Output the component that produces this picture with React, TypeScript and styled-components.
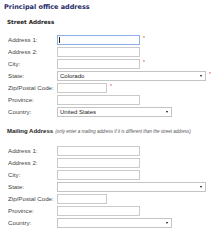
import React from 'react'
import styled, { createGlobalStyle } from 'styled-components'

const GlobalStyle = createGlobalStyle`
  html, body {
    margin: 0;
    padding: 0;
    background: #fff;
  }
`

const Page = styled.div`
  width: 220px;
  height: 229px;
  padding: 2px 0 0 4px;
  box-sizing: border-box;
  overflow: hidden;
  font-family: 'Liberation Sans', Arial, sans-serif;
  color: #333;
`

const Title = styled.div`
  font-family: 'DejaVu Sans', Verdana, sans-serif;
  font-weight: bold;
  font-size: 6.5px;
  line-height: 10px;
  color: #1f2a68;
  white-space: nowrap;
`

const SectionHeading = styled.div<{ top: number }>`
  margin: ${({ top }) => top}px 0 0 3px;
  font-family: 'DejaVu Sans', Verdana, sans-serif;
  font-weight: bold;
  font-size: 5.6px;
  line-height: 8px;
  color: #222;
  white-space: nowrap;
`

const MailingHeading = styled.div`
  margin: 7px 0 0 3px;
  line-height: 8px;
  white-space: nowrap;
  color: #222;
`

const MailingTitle = styled.span`
  font-weight: bold;
  font-size: 6px;
`

const Note = styled.span`
  font-style: italic;
  font-size: 4.5px;
  color: #555;
  margin-left: 2px;
`

const FormGrid = styled.div<{ top: number }>`
  margin: ${({ top }) => top}px 0 0 3px;
  display: grid;
  grid-template-columns: 50px auto;
  grid-auto-rows: 10px;
  row-gap: 2px;
`

const Label = styled.div`
  padding-left: 1px;
  font-size: 6.2px;
  line-height: 10px;
  color: #444;
  white-space: nowrap;
`

const Field = styled.div`
  display: flex;
  align-items: flex-start;
`

const TextBox = styled.div<{ w: number; focused?: boolean }>`
  position: relative;
  width: ${({ w }) => w}px;
  height: 10px;
  box-sizing: border-box;
  border: 1px solid ${({ focused }) => (focused ? '#8fb0e6' : '#cacaca')};
  background: #fff;
`

const Caret = styled.span`
  position: absolute;
  left: 1px;
  top: 1px;
  width: 1px;
  height: 6px;
  background: #222;
`

const SelectBox = styled.div<{ w: number }>`
  width: ${({ w }) => w}px;
  height: 10px;
  box-sizing: border-box;
  border: 1px solid #c4c4c4;
  background: #fff;
  display: flex;
  align-items: center;
  justify-content: space-between;
  padding: 0 3px 0 2px;
  font-size: 6px;
  color: #222;
`

const Arrow = styled.span`
  width: 0;
  height: 0;
  border-left: 1.5px solid transparent;
  border-right: 1.5px solid transparent;
  border-top: 2.5px solid #111;
`

const Required = styled.span`
  margin-left: 3px;
  margin-top: 1px;
  font-size: 5px;
  line-height: 5px;
  color: #e03030;
`

type Row =
  | { label: string; kind: 'text'; w: number; required?: boolean; focused?: boolean }
  | { label: string; kind: 'select'; w: number; value?: string; required?: boolean }

const streetRows: Row[] = [
  { label: 'Address 1:', kind: 'text', w: 83, required: true, focused: true },
  { label: 'Address 2:', kind: 'text', w: 83 },
  { label: 'City:', kind: 'text', w: 83, required: true },
  { label: 'State:', kind: 'select', w: 149, value: 'Colorado', required: true },
  { label: 'Zip/Postal Code:', kind: 'text', w: 50, required: true },
  { label: 'Province:', kind: 'text', w: 83 },
  { label: 'Country:', kind: 'select', w: 115, value: 'United States' },
]

const mailingRows: Row[] = [
  { label: 'Address 1:', kind: 'text', w: 83 },
  { label: 'Address 2:', kind: 'text', w: 83 },
  { label: 'City:', kind: 'text', w: 83 },
  { label: 'State:', kind: 'select', w: 149 },
  { label: 'Zip/Postal Code:', kind: 'text', w: 50 },
  { label: 'Province:', kind: 'text', w: 83 },
  { label: 'Country:', kind: 'select', w: 115 },
]

const AddressForm = ({ rows, top }: { rows: Row[]; top: number }) => (
  <FormGrid top={top}>
    {rows.map((row) => (
      <React.Fragment key={row.label}>
        <Label>{row.label}</Label>
        <Field>
          {row.kind === 'text' ? (
            <TextBox w={row.w} focused={row.focused}>
              {row.focused && <Caret />}
            </TextBox>
          ) : (
            <SelectBox w={row.w}>
              <span>{row.value ?? ''}</span>
              <Arrow />
            </SelectBox>
          )}
          {row.required && <Required>*</Required>}
        </Field>
      </React.Fragment>
    ))}
  </FormGrid>
)

export default function App() {
  return (
    <>
      <GlobalStyle />
      <Page>
        <Title>Principal office address</Title>
        <SectionHeading top={6}>Street Address</SectionHeading>
        <AddressForm rows={streetRows} top={9} />
        <MailingHeading>
          <MailingTitle>Mailing Address</MailingTitle>
          <Note>(only enter a mailing address if it is different than the street address)</Note>
        </MailingHeading>
        <AddressForm rows={mailingRows} top={10} />
      </Page>
    </>
  )
}
